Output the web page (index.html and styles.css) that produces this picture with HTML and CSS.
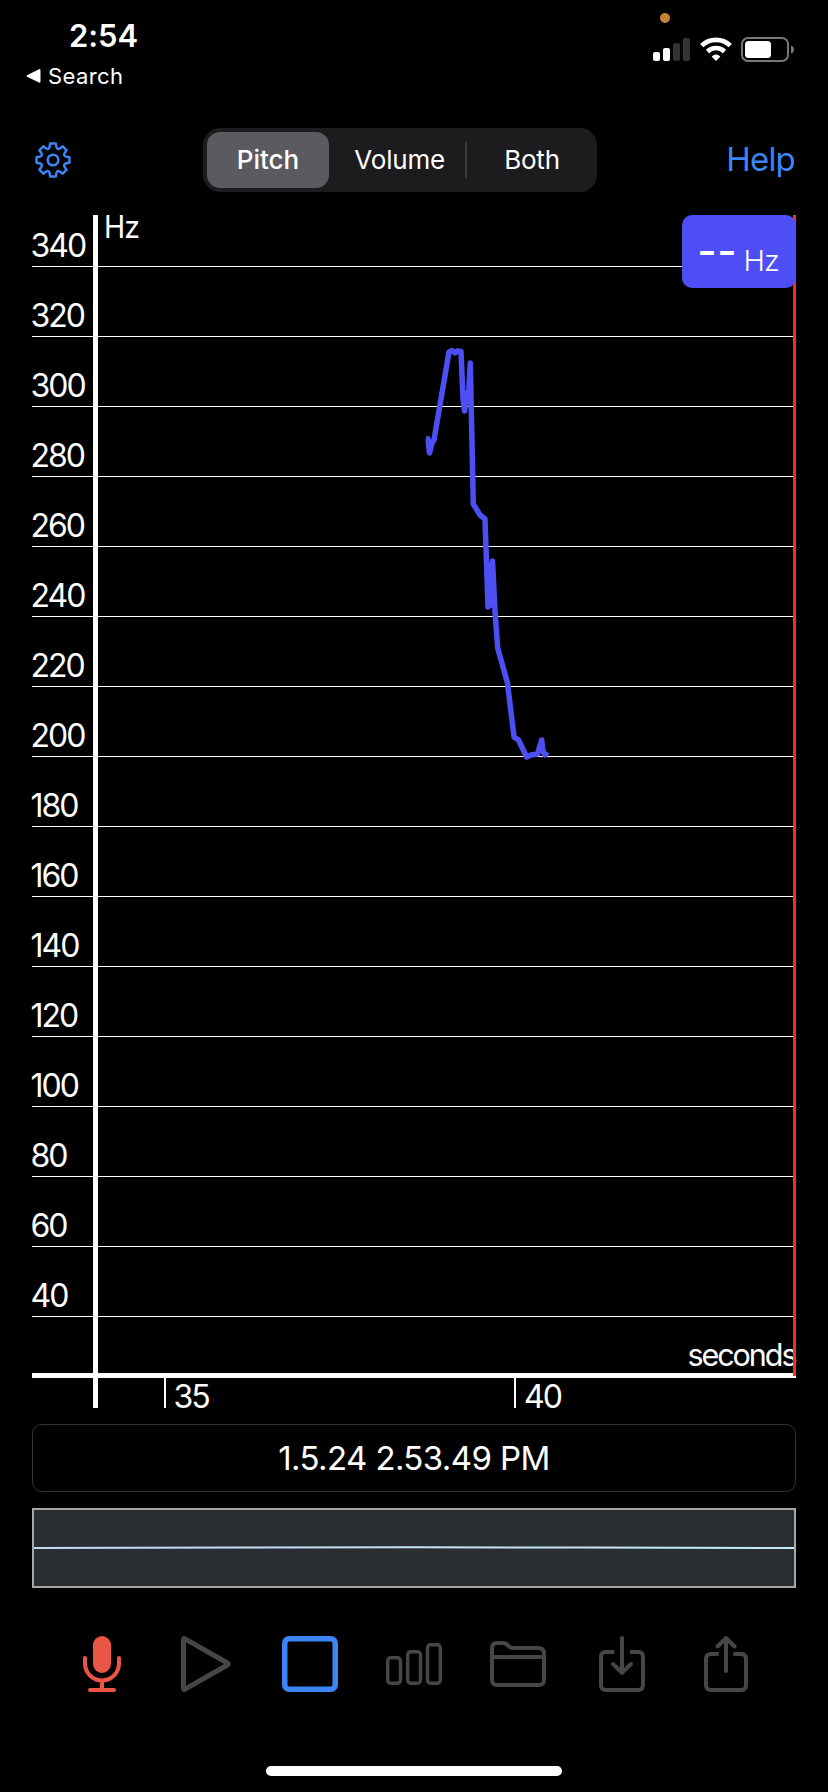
FILE: index.html
```html
<!DOCTYPE html>
<html lang="en">

<head>
    <meta charset="UTF-8">
    <meta name="viewport" content="width=device-width, initial-scale=1.0">
    <title>Pitch Analyzer</title>
    <link rel="stylesheet" href="styles.css">
</head>

<body>
    <!-- Status bar -->
    <header class="status-bar">
        <div class="status-left">
            <div class="time">2:54</div>
            <div class="back-link">
                <svg width="15" height="16" viewBox="0 0 15 16"><path d="M13 1.2 1 7.2Q0 8 1 8.8L13 14.6Q14.5 15 14.5 13.5V2.5Q14.5.8 13 1.2Z" fill="#fff"/></svg>
                <span>Search</span>
            </div>
        </div>
        <div class="status-right">
            <div class="mic-dot"></div>
            <div class="status-icons">
                <svg width="37" height="26" viewBox="0 0 37 26">
                    <rect x="0" y="15" width="7" height="9" rx="2" fill="#fff"/>
                    <rect x="10" y="11" width="7" height="13" rx="2" fill="#fff"/>
                    <rect x="20" y="6" width="7" height="18" rx="2" fill="#333"/>
                    <rect x="30" y="1" width="7" height="23" rx="2" fill="#333"/>
                </svg>
                <svg class="wifi" width="32" height="26" viewBox="0 0 32 26" fill="none" stroke="#fff" stroke-width="4.6">
                    <path d="M1.7 8.7A20.5 20.5 0 0 1 30.3 8.7"/>
                    <path d="M7.5 14.5A12.2 12.2 0 0 1 24.5 14.5"/>
                    <path d="M16 24 11.6 19.4Q16 15.6 20.4 19.4Z" fill="#fff" stroke="none"/>
                </svg>
                <svg width="53" height="26" viewBox="0 0 53 26">
                    <rect x="1" y="1" width="46" height="23" rx="6" fill="none" stroke="#777" stroke-width="2"/>
                    <rect x="4" y="4" width="26" height="17" rx="3.5" fill="#fff"/>
                    <path d="M50 8.5Q53 9.5 53 12.5T50 16.5Z" fill="#777"/>
                </svg>
            </div>
        </div>
    </header>

    <!-- Settings, display mode and help -->
    <nav class="top-nav">
        <svg class="gear" width="36" height="36" viewBox="-18 -18 36 36" fill="none" stroke="#3d84f7" stroke-width="2.5" stroke-linejoin="round">
            <circle r="5.3"/>
            <path id="gear-outline"/>
        </svg>
        <div class="segmented">
            <div class="segment active">Pitch</div>
            <div class="segment">Volume</div>
            <div class="segment divided">Both</div>
        </div>
        <a class="help">Help</a>
    </nav>

    <main class="content">
        <!-- Pitch chart -->
        <div class="chart-wrap">
            <svg class="chart" width="764" height="1193" viewBox="0 0 764 1193">
                <g id="grid"></g>
                <text class="unit" x="72" y="23" textLength="35" lengthAdjust="spacingAndGlyphs">Hz</text>
                <rect x="61" y="0" width="5" height="1193" fill="#fff"/>
                <text class="unit" x="655.5" y="1150.5" textLength="109">seconds</text>
                <rect x="0" y="1158" width="764" height="5" fill="#fff"/>
                <rect x="132" y="1163" width="2" height="30" fill="#fff"/>
                <text x="141.5" y="1193">35</text>
                <rect x="482" y="1163" width="2" height="30" fill="#fff"/>
                <text x="492" y="1193">40</text>
                <polyline class="pitch-line" points="394,223.5 396,224 397.5,238 400,228 402,225 417,137 420,135.5 423,138 425,136 429,136.5 431,183 432.5,196 435,178 436.5,180 438.3,148 441.3,289 448,300 453,304 456,392 458.5,350 459.5,390 460.5,346 463,396 465.7,433 475.5,468 482,522 486.5,525 494.7,542 499,540 505.5,539 509.7,525 511,536 513,540 515,537"/>
                <rect x="761" y="0" width="3" height="1161" fill="#ea3323"/>
            </svg>
            <div class="reading"><b>--</b><span>Hz</span></div>
        </div>

        <div class="recording-name">1.5.24 2.53.49 PM</div>

        <div class="waveform">
            <svg width="760" height="76" viewBox="0 0 760 76" fill="none" stroke-width="2">
                <defs>
                    <linearGradient id="wave" gradientUnits="userSpaceOnUse" x1="0" y1="0" x2="760" y2="0">
                        <stop offset="0" stop-color="#c0dbf5"/>
                        <stop offset="1" stop-color="#c4eafa"/>
                    </linearGradient>
                </defs>
                <path d="M0 38C200 38 200 37.2 380 37.2S560 38 760 38" stroke="url(#wave)"/>
            </svg>
        </div>
    </main>

    <!-- Toolbar -->
    <footer class="toolbar">
        <svg width="56" height="56" viewBox="0 0 56 56" fill="none" stroke="#eb5545" stroke-width="4" stroke-linecap="round">
            <rect x="19" y="0" width="18" height="37" rx="9" fill="#eb5545" stroke="none"/>
            <path d="M11 22v5.500a17 17 0 0 0 34 0V22M28 45v8M16 54h24"/>
        </svg>
        <svg width="56" height="56" viewBox="0 0 56 56" fill="none" stroke="#464648" stroke-width="5" stroke-linejoin="round">
            <path d="M5.500 3.700Q5.500 2 7 2.900L49.500 27Q51 28 49.500 29L7 53.100Q5.500 54 5.500 52.300Z"/>
        </svg>
        <svg width="56" height="56" viewBox="0 0 56 56" fill="none" stroke="#3d84f7" stroke-width="5.500">
            <rect x="2.750" y="2.750" width="50.500" height="50.500" rx="4.500"/>
        </svg>
        <svg width="56" height="56" viewBox="0 0 56 56" fill="none" stroke="#464648" stroke-width="3.400">
            <rect x="1.700" y="21.700" width="12.800" height="25.600" rx="3"/>
            <rect x="21.700" y="15.700" width="12.800" height="31.600" rx="3"/>
            <rect x="41.500" y="8.700" width="12.800" height="38.600" rx="3"/>
        </svg>
        <svg width="56" height="56" viewBox="0 0 56 56" fill="none" stroke="#464648" stroke-width="4">
            <path d="M2 44V12Q2 7 7 7H13Q16 7 18 9.500Q20 12 23 12H48Q54 12 54 18V44Q54 49 49 49H7Q2 49 2 44ZM2 21H54"/>
        </svg>
        <svg width="56" height="56" viewBox="0 0 56 56" fill="none" stroke="#464648" stroke-width="4" stroke-linejoin="round">
            <path d="M20.300 16H12Q7 16 7 21V49Q7 54 12 54H44Q49 54 49 49V21Q49 16 44 16H36"/>
            <path d="M28 2V36M19 28l9 8.800 9-8.800" stroke-linecap="round"/>
        </svg>
        <svg width="56" height="56" viewBox="0 0 56 56" fill="none" stroke="#464648" stroke-width="4" stroke-linejoin="round">
            <path d="M20.700 18H13Q8 18 8 23V49Q8 54 13 54H43Q48 54 48 49V23Q48 18 43 18H35.300"/>
            <path d="M28 35V2M19.500 10.500l8.500-8.500 8.500 8.500" stroke-linecap="round"/>
        </svg>
    </footer>
    <div class="home-indicator"></div>

    <script src="script.js"></script>
</body>

</html>
```

FILE: styles.css
```css
* {
    box-sizing: border-box;
}

body {
    margin: 0;
    width: 828px;
    height: 1792px;
    background: #000;
    color: #fff;
    font-family: Inter, "Liberation Sans", sans-serif;
    display: flex;
    flex-direction: column;
    overflow: hidden;
}

svg {
    display: block;
    flex-shrink: 0;
}

/* Status bar */
.status-bar {
    height: 128px;
    display: flex;
    justify-content: space-between;
    padding: 0 34px 0 26px;
}

.time {
    margin: 16px 0 0 43px;
    font-size: 31px;
    line-height: 40px;
    font-weight: 600;
    letter-spacing: -0.1px;
}

.back-link {
    display: flex;
    align-items: center;
    gap: 7px;
    margin-top: 6px;
    font-size: 22px;
    line-height: 28px;
    letter-spacing: 0.4px;
}

.mic-dot {
    width: 10px;
    height: 10px;
    margin: 13px 0 14px 7px;
    border-radius: 50%;
    background: #c6832f;
}

.status-icons {
    display: flex;
    gap: 10px;
}

.wifi {
    margin-right: -1px;
}

/* Top controls */
.top-nav {
    height: 64px;
    display: flex;
    align-items: center;
    padding: 0 33px 0 35px;
}

.segmented {
    width: 394px;
    height: 64px;
    display: flex;
    margin-left: 132px;
    padding: 4px 0;
    background: #1c1c1e;
    border-radius: 17px;
}

.segment {
    width: 131.33px;
    display: flex;
    align-items: center;
    justify-content: center;
    padding-bottom: 1px;
    font-size: 26px;
    letter-spacing: -0.2px;
}

.segment.active {
    width: 122px;
    margin: 0 5px 0 4px;
    background: #5b5a5f;
    border-radius: 13px;
    font-weight: 500;
    letter-spacing: 0;
}

.segment.divided::before {
    content: "";
    width: 2px;
    height: 36px;
    margin-right: auto;
    background: #3a3a3d;
}

.segment.divided::after {
    content: "";
    margin-left: auto;
}

.help {
    margin-left: auto;
    padding-bottom: 2px;
    color: #3d84f7;
    font-size: 33px;
    letter-spacing: -0.8px;
}

/* Chart */
.content {
    display: flex;
    flex-direction: column;
    gap: 16px;
    padding: 23px 32px 0;
}

.chart-wrap {
    position: relative;
}

.chart {
    overflow: visible;
}

.chart text {
    fill: #fff;
    font-size: 32px;
    letter-spacing: -2px;
}

.chart .unit {
    font-size: 30.5px;
    letter-spacing: -1px;
}

.grid-line {
    stroke: #fff;
    stroke-width: 1;
}

.pitch-line {
    fill: none;
    stroke: #4e4ef5;
    stroke-width: 5.5;
    stroke-linejoin: round;
}

.reading {
    position: absolute;
    top: 0;
    right: 0;
    width: 114px;
    height: 73px;
    padding: 0 17px 9px 0;
    display: flex;
    align-items: flex-end;
    justify-content: flex-end;
    gap: 6px;
    background: #4e4ef5;
    border-radius: 10px;
    font-size: 29px;
    line-height: 36px;
    font-weight: 300;
    letter-spacing: -0.8px;
}

.reading b {
    padding-bottom: 10px;
    font-size: 42px;
    font-weight: 500;
    letter-spacing: 0.6px;
}

.recording-name {
    height: 68px;
    display: flex;
    align-items: center;
    justify-content: center;
    border: 1px solid #333335;
    border-radius: 10px;
    font-size: 33px;
    letter-spacing: -0.6px;
}

.waveform {
    height: 80px;
    background: #2a2e32;
    border: 2px solid #a5a7a8;
}

/* Bottom toolbar */
.toolbar {
    display: flex;
    gap: 48px;
    padding: 48px 74px 0;
}

.home-indicator {
    width: 296px;
    height: 10px;
    margin: 74px auto 0;
    background: #fff;
    border-radius: 5px;
}
```

FILE: script.js
```javascript
const svgNS = "http://www.w3.org/2000/svg";

// Horizontal grid lines with their frequency labels
const grid = document.getElementById("grid");
for (let i = 0; i < 16; i++) {
    const y = 51.5 + i * 70;

    const line = document.createElementNS(svgNS, "line");
    line.setAttribute("class", "grid-line");
    line.setAttribute("x1", 0);
    line.setAttribute("x2", 764);
    line.setAttribute("y1", y);
    line.setAttribute("y2", y);
    grid.appendChild(line);

    const label = document.createElementNS(svgNS, "text");
    label.setAttribute("x", -1.5);
    label.setAttribute("y", y - 10);
    label.textContent = 340 - i * 20;
    grid.appendChild(label);
}

// Gear outline: eight teeth joined by rounded valleys
function polar(angle, radius) {
    return (radius * Math.cos(angle)).toFixed(2) + " " + (radius * Math.sin(angle)).toFixed(2);
}

const step = Math.PI / 4;
let path = "M" + polar(-0.24, 13.8);
for (let i = 0; i < 8; i++) {
    const a = i * step;
    path += "L" + polar(a - 0.17, 16.7) + "L" + polar(a + 0.17, 16.7) + "L" + polar(a + 0.24, 13.8);
    path += "Q" + polar(a + step / 2, 10.6) + " " + polar(a + step - 0.24, 13.8);
}
document.getElementById("gear-outline").setAttribute("d", path + "Z");
```
